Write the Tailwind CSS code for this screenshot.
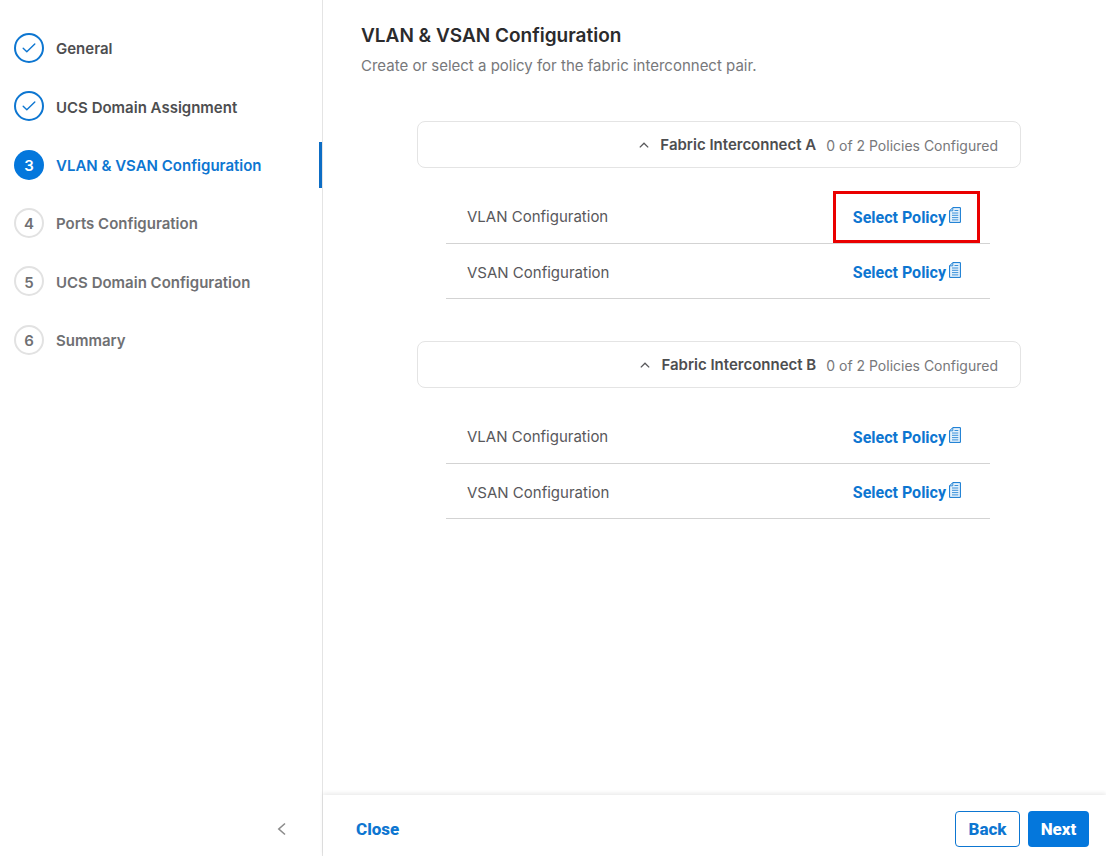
<!DOCTYPE html>
<html lang="en">
<head>
    <meta charset="UTF-8">
    <meta name="viewport" content="width=device-width, initial-scale=1.0">
    <title>VLAN & VSAN Configuration</title>
    <script src="https://cdn.jsdelivr.net/npm/@tailwindcss/browser@4"></script>
</head>
<body class="bg-white font-['Inter',sans-serif] text-[15px] text-[#58585b]">
    <!-- Shared icons -->
    <svg class="hidden" xmlns="http://www.w3.org/2000/svg">
        <symbol id="icon-check" viewBox="0 0 14 10" fill="none" stroke="currentColor" stroke-width="1.4" stroke-linecap="round" stroke-linejoin="round">
            <path d="M1.2 5.3L4.8 8.8L12.8 1"></path>
        </symbol>
        <symbol id="icon-up" viewBox="0 0 10 6" fill="none" stroke="currentColor" stroke-width="1.3">
            <path d="M.8 5.4L5 1.2L9.2 5.4"></path>
        </symbol>
        <symbol id="icon-policy" viewBox="0 0 12 16" fill="none" stroke="currentColor">
            <path fill="#e6f2fc" d="M3.8 .6H11.4V15.4H.6V3.8Z"></path>
            <path d="M3.8 .6V3.8H.6M5.5 3.5H9.3M3 6H9.3M3 8.3H9.3M3 10.6H9.3M3 12.9H9.3" stroke-width=".8"></path>
        </symbol>
    </svg>

    <div class="flex min-h-screen">
        <!-- Wizard steps -->
        <aside class="flex w-[323px] shrink-0 flex-col justify-between border-r border-[#e4e4e4] pt-[19px] pb-5">
            <ol class="grid h-[350px] grid-rows-6 items-center font-semibold text-[#6f7073]">
                <li class="flex h-[46px] items-center gap-3 pl-[14px] text-[#4d4e50]">
                    <span class="flex size-[30px] items-center justify-center rounded-full border-2 border-[#0d76d1] text-[#0d76d1]">
                        <svg class="h-[10px] w-[14px]"><use href="#icon-check"></use></svg>
                    </span>
                    <span class="pt-[3px]">General</span>
                </li>
                <li class="flex h-[46px] items-center gap-3 pl-[14px] text-[#4d4e50]">
                    <span class="flex size-[30px] items-center justify-center rounded-full border-2 border-[#0d76d1] text-[#0d76d1]">
                        <svg class="h-[10px] w-[14px]"><use href="#icon-check"></use></svg>
                    </span>
                    <span class="pt-[3px]">UCS Domain Assignment</span>
                </li>
                <li class="flex h-[46px] items-center gap-3 border-r-3 border-[#0d6dc4] pl-[14px] text-[#0d76d1]" aria-current="step">
                    <span class="flex size-[30px] items-center justify-center rounded-full bg-[#0477dc] pt-[3px] text-white">3</span>
                    <span class="pt-[3px]">VLAN &amp; VSAN Configuration</span>
                </li>
                <li class="flex h-[46px] items-center gap-3 pl-[14px]">
                    <span class="flex size-[30px] items-center justify-center rounded-full border-2 border-[#e2e2e2] pt-[3px]">4</span>
                    <span class="pt-[3px]">Ports Configuration</span>
                </li>
                <li class="flex h-[46px] items-center gap-3 pl-[14px]">
                    <span class="flex size-[30px] items-center justify-center rounded-full border-2 border-[#e2e2e2] pt-[3px]">5</span>
                    <span class="pt-[3px]">UCS Domain Configuration</span>
                </li>
                <li class="flex h-[46px] items-center gap-3 pl-[14px]">
                    <span class="flex size-[30px] items-center justify-center rounded-full border-2 border-[#e2e2e2] pt-[3px]">6</span>
                    <span class="pt-[3px]">Summary</span>
                </li>
            </ol>
            <button type="button" class="mr-9 self-end text-[#8c8c8c]" aria-label="Collapse">
                <svg class="h-[14px] w-[9px]" viewBox="0 0 9 14" fill="none" stroke="currentColor" stroke-width="1.6"><path d="M8 1.5L1.8 7L8 12.5"></path></svg>
            </button>
        </aside>

        <div class="flex min-w-0 flex-1 flex-col">
            <main class="flex-1 pt-[23px] pr-[85px] pl-[38px]">
                <h1 class="text-[19px] leading-[26px] font-semibold text-[#2b2b2d]">VLAN &amp; VSAN Configuration</h1>
                <p class="mt-[7px] leading-5 text-[#77787b]">Create or select a policy for the fabric interconnect pair.</p>

                <div class="mt-[45px] ml-14 flex flex-col gap-[42px]">
                    <section>
                        <button type="button" class="flex h-[47px] w-full items-center justify-end rounded-lg border border-[#e4e4e4] pt-0.5 pr-[22px]" aria-expanded="true">
                            <svg class="mr-[11px] mb-0.5 h-[6px] w-[10px]"><use href="#icon-up"></use></svg>
                            <span class="mr-[10px] font-semibold text-[#4d4e50]">Fabric Interconnect A</span>
                            <span class="text-sm text-[#77787b]">0 of 2 Policies Configured</span>
                        </button>
                        <ul class="mt-5 mr-[31px] ml-[29px]">
                            <li class="relative flex h-[56px] items-center justify-between border-b border-[#d3d3d3] pt-1 pr-[29px] pl-[21px]">
                                <span>VLAN Configuration</span>
                                <button type="button" class="flex items-center gap-[3px] font-['Roboto',sans-serif] text-base font-bold text-[#0d76d1]">
                                    Select Policy
                                    <svg class="mb-1.5 h-4 w-3"><use href="#icon-policy"></use></svg>
                                </button>
                                <span class="pointer-events-none absolute top-[3px] right-[10px] bottom-0 w-[147px] border-3 border-[#ea0000]"></span>
                            </li>
                            <li class="flex h-[55px] items-center justify-between border-b border-[#d3d3d3] pt-1 pr-[29px] pl-[21px]">
                                <span>VSAN Configuration</span>
                                <button type="button" class="flex items-center gap-[3px] font-['Roboto',sans-serif] text-base font-bold text-[#0d76d1]">
                                    Select Policy
                                    <svg class="mb-1.5 h-4 w-3"><use href="#icon-policy"></use></svg>
                                </button>
                            </li>
                        </ul>
                    </section>

                    <section>
                        <button type="button" class="flex h-[47px] w-full items-center justify-end rounded-lg border border-[#e4e4e4] pt-0.5 pr-[22px]" aria-expanded="true">
                            <svg class="mr-[11px] mb-0.5 h-[6px] w-[10px]"><use href="#icon-up"></use></svg>
                            <span class="mr-[10px] font-semibold text-[#4d4e50]">Fabric Interconnect B</span>
                            <span class="text-sm text-[#77787b]">0 of 2 Policies Configured</span>
                        </button>
                        <ul class="mt-5 mr-[31px] ml-[29px]">
                            <li class="flex h-[56px] items-center justify-between border-b border-[#d3d3d3] pt-1 pr-[29px] pl-[21px]">
                                <span>VLAN Configuration</span>
                                <button type="button" class="flex items-center gap-[3px] font-['Roboto',sans-serif] text-base font-bold text-[#0d76d1]">
                                    Select Policy
                                    <svg class="mb-1.5 h-4 w-3"><use href="#icon-policy"></use></svg>
                                </button>
                            </li>
                            <li class="flex h-[55px] items-center justify-between border-b border-[#d3d3d3] pt-1 pr-[29px] pl-[21px]">
                                <span>VSAN Configuration</span>
                                <button type="button" class="flex items-center gap-[3px] font-['Roboto',sans-serif] text-base font-bold text-[#0d76d1]">
                                    Select Policy
                                    <svg class="mb-1.5 h-4 w-3"><use href="#icon-policy"></use></svg>
                                </button>
                            </li>
                        </ul>
                    </section>
                </div>
            </main>

            <footer class="flex h-[61px] items-center gap-2 pt-[7px] pr-[17px] pl-[33px] font-['Roboto',sans-serif] text-[17px] font-extrabold text-[#0d76d1] shadow-[0_-2px_4px_rgba(0,0,0,0.08)]">
                <button type="button" class="mr-auto pt-0.5">Close</button>
                <button type="button" class="h-9 w-[65px] rounded border border-[#0d76d1] pt-0.5">Back</button>
                <button type="button" class="h-9 w-[61px] rounded bg-[#0477dc] pt-0.5 text-white">Next</button>
            </footer>
        </div>
    </div>
</body>
</html>
